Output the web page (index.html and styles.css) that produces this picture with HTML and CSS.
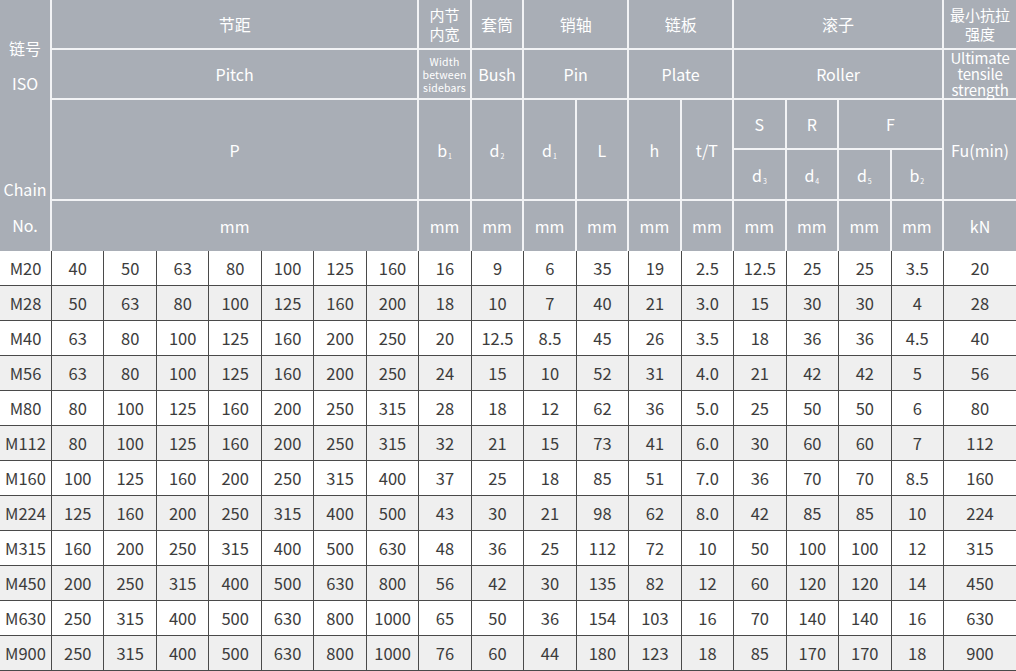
FILE: index.html
```html
<!DOCTYPE html>
<html lang="zh">
<head>
<meta charset="utf-8">
<title>Chain table</title>
<link rel="stylesheet" href="styles.css">
</head>
<body>
<table class="spec">
  <colgroup>
    <col class="c-no">
    <col class="c"><col class="c"><col class="c"><col class="c"><col class="c"><col class="c"><col class="c">
    <col class="c"><col class="c"><col class="c"><col class="c"><col class="c"><col class="c">
    <col class="c"><col class="c"><col class="c"><col class="c">
    <col class="c-fu">
  </colgroup>
  <thead>
    <tr class="h1">
      <th rowspan="5" class="chainno">
        <div class="chainno-in">
          <div class="grp grp1"><span>链号</span><span>ISO</span></div>
          <div class="grp grp2"><span>Chain</span><span>No.</span></div>
        </div>
      </th>
      <th colspan="7">节距</th>
      <th class="two">内节<br>内宽</th>
      <th>套筒</th>
      <th colspan="2">销轴</th>
      <th colspan="2">链板</th>
      <th colspan="4">滚子</th>
      <th class="two last">最小抗拉<br>强度</th>
    </tr>
    <tr class="h2">
      <th colspan="7">Pitch</th>
      <th class="tiny">Width<br>between<br>sidebars</th>
      <th>Bush</th>
      <th colspan="2">Pin</th>
      <th colspan="2">Plate</th>
      <th colspan="4">Roller</th>
      <th class="uts last">Ultimate<br>tensile<br>strength</th>
    </tr>
    <tr class="h3">
      <th colspan="7" rowspan="2">P</th>
      <th rowspan="2">b<sub>1</sub></th>
      <th rowspan="2">d<sub>2</sub></th>
      <th rowspan="2">d<sub>1</sub></th>
      <th rowspan="2">L</th>
      <th rowspan="2">h</th>
      <th rowspan="2">t/T</th>
      <th>S</th>
      <th>R</th>
      <th colspan="2">F</th>
      <th rowspan="2" class="last">Fu(min)</th>
    </tr>
    <tr class="h4">
      <th>d<sub>3</sub></th>
      <th>d<sub>4</sub></th>
      <th>d<sub>5</sub></th>
      <th>b<sub>2</sub></th>
    </tr>
    <tr class="h5">
      <th colspan="7">mm</th>
      <th>mm</th><th>mm</th><th>mm</th><th>mm</th><th>mm</th><th>mm</th>
      <th>mm</th><th>mm</th><th>mm</th><th>mm</th>
      <th class="last">kN</th>
    </tr>
  </thead>
  <tbody>
    <tr><td>M20</td><td>40</td><td>50</td><td>63</td><td>80</td><td>100</td><td>125</td><td>160</td><td>16</td><td>9</td><td>6</td><td>35</td><td>19</td><td>2.5</td><td>12.5</td><td>25</td><td>25</td><td>3.5</td><td>20</td></tr>
    <tr><td>M28</td><td>50</td><td>63</td><td>80</td><td>100</td><td>125</td><td>160</td><td>200</td><td>18</td><td>10</td><td>7</td><td>40</td><td>21</td><td>3.0</td><td>15</td><td>30</td><td>30</td><td>4</td><td>28</td></tr>
    <tr><td>M40</td><td>63</td><td>80</td><td>100</td><td>125</td><td>160</td><td>200</td><td>250</td><td>20</td><td>12.5</td><td>8.5</td><td>45</td><td>26</td><td>3.5</td><td>18</td><td>36</td><td>36</td><td>4.5</td><td>40</td></tr>
    <tr><td>M56</td><td>63</td><td>80</td><td>100</td><td>125</td><td>160</td><td>200</td><td>250</td><td>24</td><td>15</td><td>10</td><td>52</td><td>31</td><td>4.0</td><td>21</td><td>42</td><td>42</td><td>5</td><td>56</td></tr>
    <tr><td>M80</td><td>80</td><td>100</td><td>125</td><td>160</td><td>200</td><td>250</td><td>315</td><td>28</td><td>18</td><td>12</td><td>62</td><td>36</td><td>5.0</td><td>25</td><td>50</td><td>50</td><td>6</td><td>80</td></tr>
    <tr><td>M112</td><td>80</td><td>100</td><td>125</td><td>160</td><td>200</td><td>250</td><td>315</td><td>32</td><td>21</td><td>15</td><td>73</td><td>41</td><td>6.0</td><td>30</td><td>60</td><td>60</td><td>7</td><td>112</td></tr>
    <tr><td>M160</td><td>100</td><td>125</td><td>160</td><td>200</td><td>250</td><td>315</td><td>400</td><td>37</td><td>25</td><td>18</td><td>85</td><td>51</td><td>7.0</td><td>36</td><td>70</td><td>70</td><td>8.5</td><td>160</td></tr>
    <tr><td>M224</td><td>125</td><td>160</td><td>200</td><td>250</td><td>315</td><td>400</td><td>500</td><td>43</td><td>30</td><td>21</td><td>98</td><td>62</td><td>8.0</td><td>42</td><td>85</td><td>85</td><td>10</td><td>224</td></tr>
    <tr><td>M315</td><td>160</td><td>200</td><td>250</td><td>315</td><td>400</td><td>500</td><td>630</td><td>48</td><td>36</td><td>25</td><td>112</td><td>72</td><td>10</td><td>50</td><td>100</td><td>100</td><td>12</td><td>315</td></tr>
    <tr><td>M450</td><td>200</td><td>250</td><td>315</td><td>400</td><td>500</td><td>630</td><td>800</td><td>56</td><td>42</td><td>30</td><td>135</td><td>82</td><td>12</td><td>60</td><td>120</td><td>120</td><td>14</td><td>450</td></tr>
    <tr><td>M630</td><td>250</td><td>315</td><td>400</td><td>500</td><td>630</td><td>800</td><td>1000</td><td>65</td><td>50</td><td>36</td><td>154</td><td>103</td><td>16</td><td>70</td><td>140</td><td>140</td><td>16</td><td>630</td></tr>
    <tr><td>M900</td><td>250</td><td>315</td><td>400</td><td>500</td><td>630</td><td>800</td><td>1000</td><td>76</td><td>60</td><td>44</td><td>180</td><td>123</td><td>18</td><td>85</td><td>170</td><td>170</td><td>18</td><td>900</td></tr>
  </tbody>
</table>
</body>
</html>
```

FILE: styles.css
```css
* { box-sizing: border-box; }

html, body {
  margin: 0;
  padding: 0;
  background: #ffffff;
}

body {
  width: 1016px;
  height: 671px;
  overflow: hidden;
  font-family: "Noto Sans CJK SC", "Noto Sans", sans-serif;
}

.spec {
  width: 1016px;
  table-layout: fixed;
  border-collapse: separate;
  border-spacing: 0;
}

.c-no { width: 52px; }
.c { width: 52.47px; }
.c-fu { width: 72px; }

.spec th {
  background: #a9aeb6;
  color: #ffffff;
  font-weight: 400;
  font-size: 16px;
  line-height: 18px;
  padding: 0;
  text-align: center;
  vertical-align: middle;
  border-right: 2px solid #f2f3f5;
  border-bottom: 2px solid #f2f3f5;
  white-space: nowrap;
}

.spec th.last { border-right: none; }
.spec .h5 th { border-bottom: none; }

.h1 { height: 50px; }
.h2 { height: 50px; }
.h3 { height: 50px; }
.h4 { height: 51px; }
.h5 { height: 50px; }

.spec th.two {
  font-size: 15px;
  line-height: 19px;
}

.spec th.tiny {
  font-size: 10.5px;
  line-height: 13px;
  letter-spacing: 0.2px;
}

.spec th.uts {
  font-size: 15px;
  line-height: 16px;
  letter-spacing: -0.2px;
}

.spec th sub {
  font-size: 7px;
  line-height: 0;
  vertical-align: -2px;
  margin-left: 1px;
}

.spec th.chainno {
  vertical-align: top;
  border-bottom: none;
}

.chainno-in {
  height: 251px;
  display: flex;
  flex-direction: column;
  justify-content: space-between;
  padding: 31px 0 8px;
}

.grp {
  display: flex;
  flex-direction: column;
  align-items: center;
}

.grp1 span { line-height: 35px; }
.grp2 span { line-height: 36px; }

.spec td {
  height: 35px;
  padding: 0;
  text-align: center;
  vertical-align: middle;
  color: #3c3c3c;
  font-size: 16.5px;
  font-weight: 400;
  border-right: 1px solid #4a4a4a;
  border-bottom: 1px solid #4a4a4a;
  white-space: nowrap;
}

.spec td:last-child { border-right: none; }

.spec tbody tr:nth-child(even) td { background: #efefef; }
.spec tbody tr:nth-child(odd) td { background: #ffffff; }
```
